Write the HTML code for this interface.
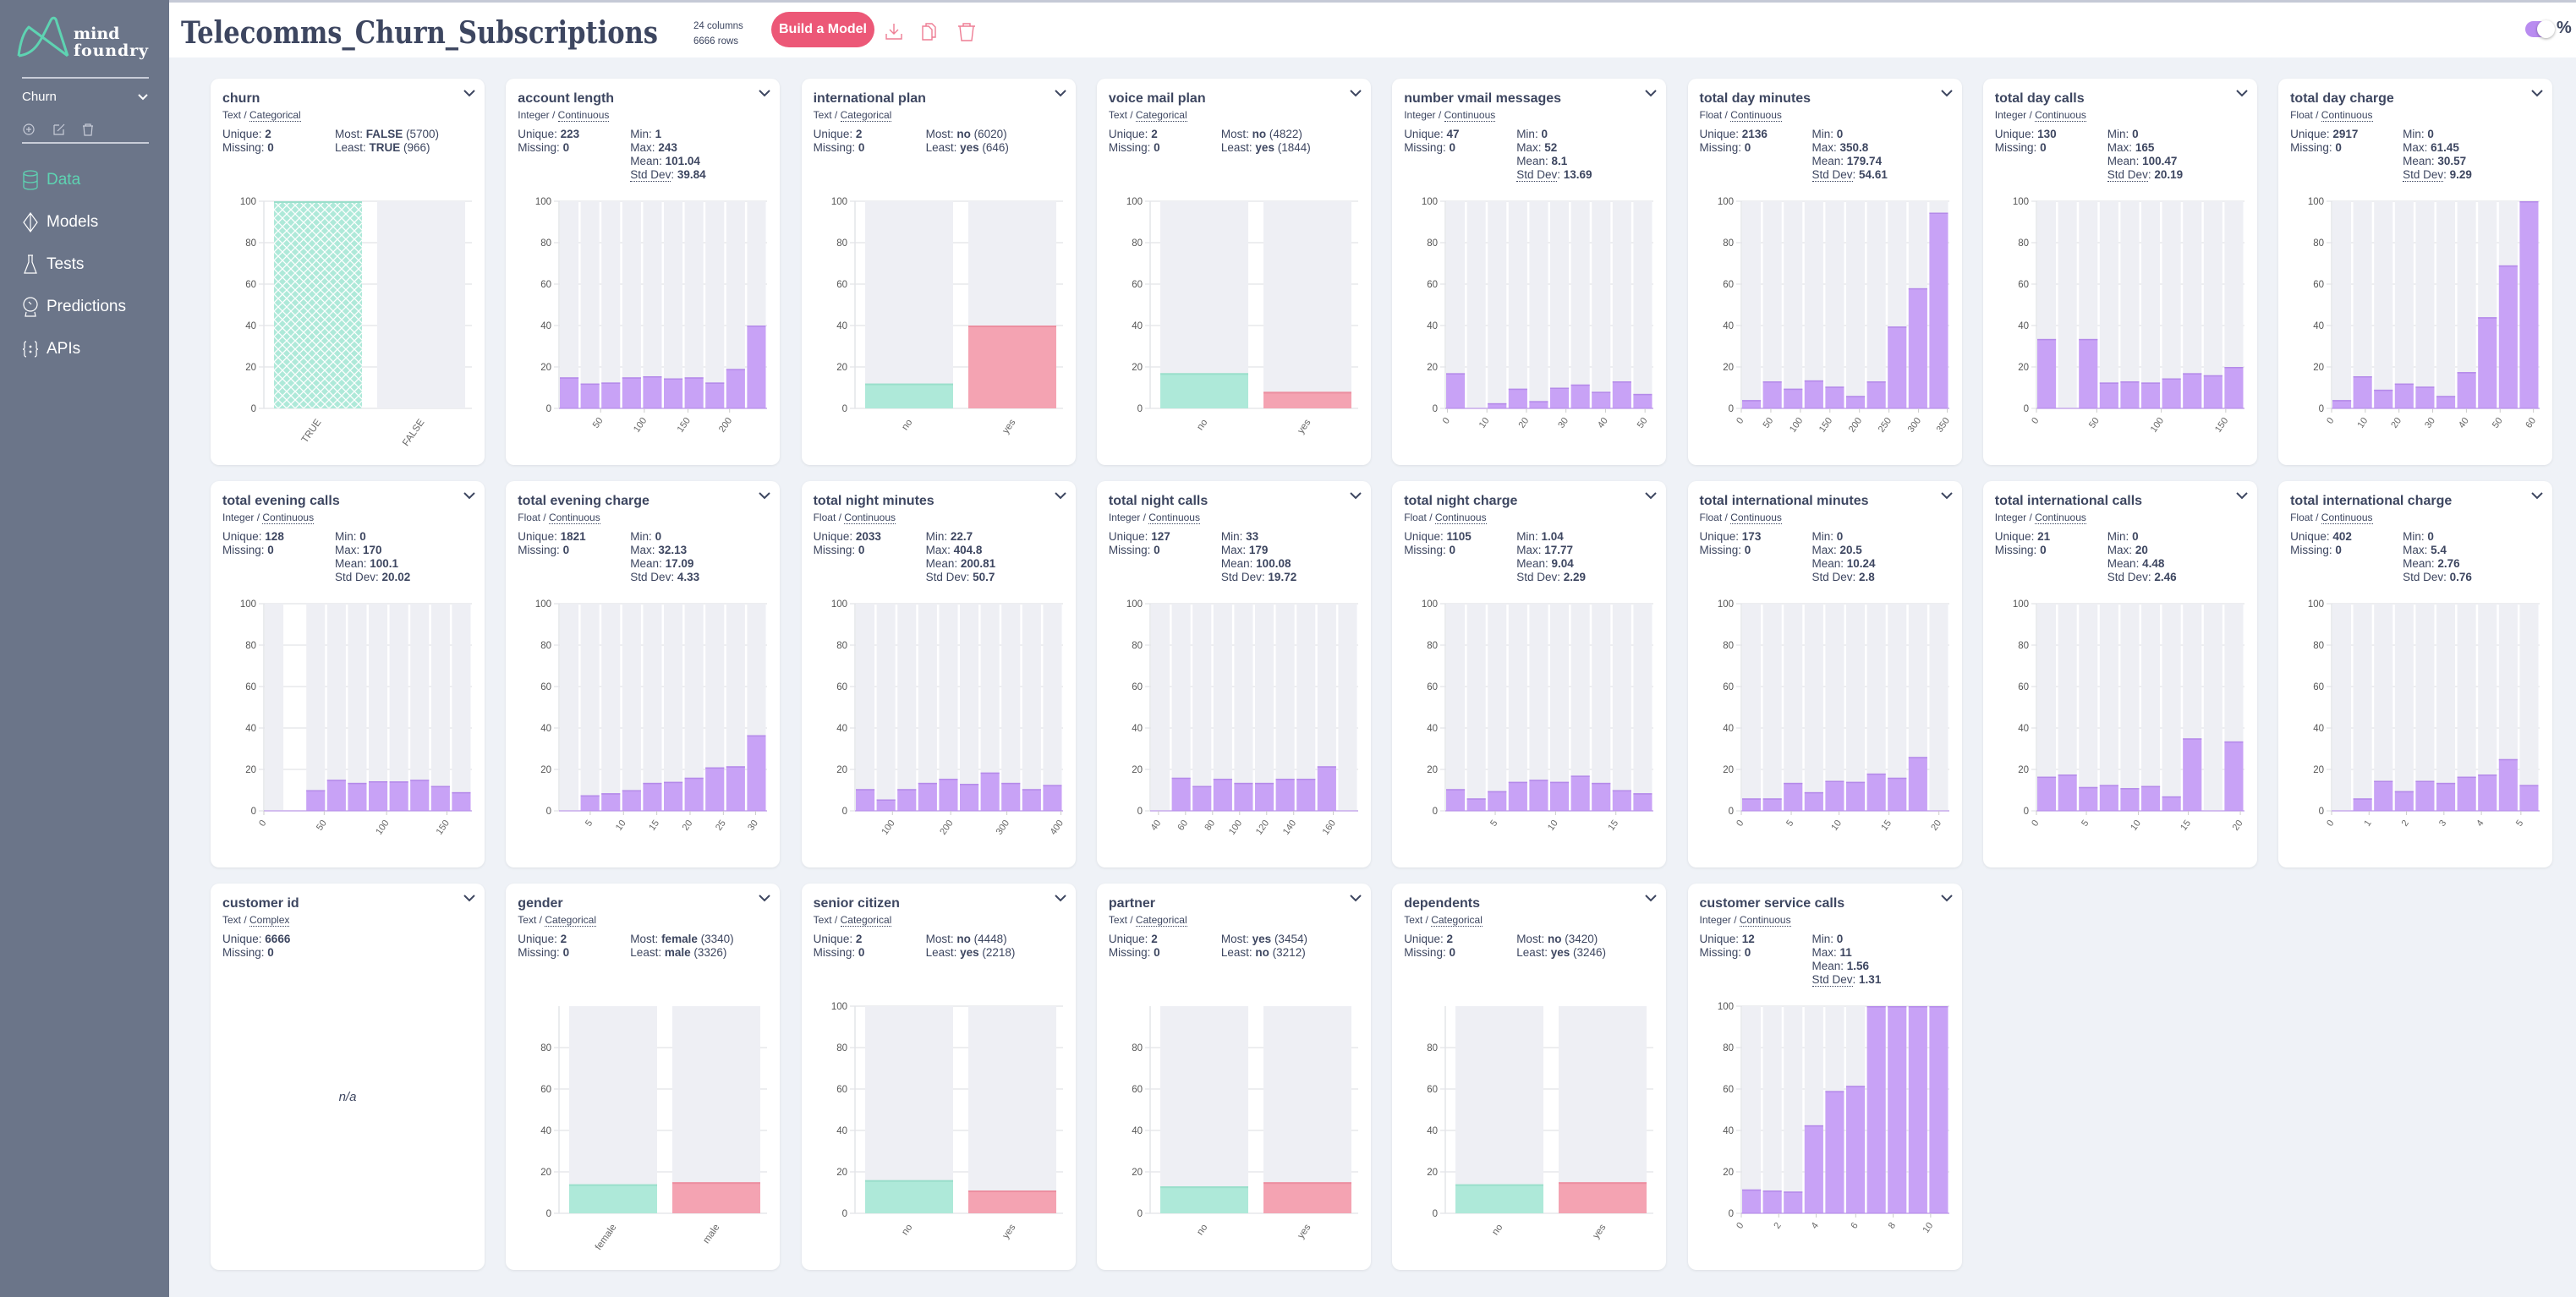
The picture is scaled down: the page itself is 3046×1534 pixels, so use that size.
<!DOCTYPE html>
<html><head><meta charset="utf-8">
<style>
*{box-sizing:border-box;margin:0;padding:0}
body{width:3046px;height:1534px;overflow:hidden;background:#eff2f7;font-family:"Liberation Sans",sans-serif;color:#3d4660;position:relative}
#side{position:absolute;left:0;top:0;width:200px;height:1534px;background:#6b7589}
#head{position:absolute;left:200px;top:0;width:2846px;height:68px;background:#fff;border-top:3px solid #c5c9d6}
.card{position:absolute;width:324px;height:457px;background:#fff;border-radius:10px;box-shadow:0 1px 3px rgba(0,0,0,.08)}
.card .t{position:absolute;left:14px;top:15px;font-size:16px;font-weight:bold;color:#3d4660;white-space:nowrap}
.card .ty{position:absolute;left:14px;top:36px;font-size:12px;color:#3d4660}
.card .ty span{border-bottom:1.5px dotted #3d4660}
.card .st{position:absolute;top:58px;font-size:13.5px;line-height:16px;white-space:nowrap}
.card .st b{font-weight:bold}
.card .ch{position:absolute;right:10px;top:12px}
.card svg.c{position:absolute;left:0;top:0}
.nav{position:absolute;left:26px;font-size:19px;color:#fff;display:flex;align-items:center}
.nav svg{margin-right:9px}
</style></head><body>
<div id="side">
<svg style="position:absolute;left:0;top:0" width="200" height="80">
<path d="M22,66 C24,50 28,38 34,32 L80,66 M22,66 C40,64 47,50 53,38 L60,24 C62,20 66,20 67,26 L80,66" fill="none" stroke="#5ed3b2" stroke-width="3" stroke-linejoin="round"/>
<text x="87" y="46" font-family="DejaVu Serif" font-weight="bold" font-size="19" fill="#fff">mind</text>
<text x="87" y="66" font-family="DejaVu Serif" font-weight="bold" font-size="19" fill="#fff" textLength="88">foundry</text>
</svg>
<div style="position:absolute;left:26px;top:91px;width:150px;height:2px;background:#c8ccd8"></div>
<div style="position:absolute;left:26px;top:106px;font-size:15px;color:#fff">Churn</div>
<svg style="position:absolute;left:162px;top:110px" width="14" height="10"><path d="M2,2 L7,7 L12,2" fill="none" stroke="#fff" stroke-width="2"/></svg>
<svg style="position:absolute;left:26px;top:143px" width="120" height="20" fill="none" stroke="#c8ccd8" stroke-width="1.2">
<circle cx="8" cy="10" r="6"/><path d="M8,7 V13 M5,10 H11"/>
<path d="M38,5 H44 M38,5 V16 H49 V10 M42,12 L50,4"/>
<path d="M72,6 H84 M75,6 V4 H81 V6 M73,6 L74,17 H82 L83,6"/>
</svg>
<div style="position:absolute;left:26px;top:168px;width:150px;height:2px;background:#c8ccd8"></div>
<div class="nav" style="top:200px;color:#5ed3b2"><svg width="20" height="26" fill="none" stroke="#5ed3b2" stroke-width="1.3"><ellipse cx="10" cy="5" rx="8" ry="3"/><path d="M2,5 V21 C2,25 18,25 18,21 V5 M2,13 C2,17 18,17 18,13"/></svg>Data</div>
<div class="nav" style="top:250px"><svg width="20" height="26" fill="none" stroke="#fff" stroke-width="1.2"><path d="M10,2 L18,13 L10,24 L2,13 Z M10,2 V24"/></svg>Models</div>
<div class="nav" style="top:300px"><svg width="20" height="26" fill="none" stroke="#fff" stroke-width="1.2"><path d="M7,2 H13 M8,2 V10 L3,23 H17 L12,10 V2"/></svg>Tests</div>
<div class="nav" style="top:350px"><svg width="20" height="26" fill="none" stroke="#fff" stroke-width="1.2"><circle cx="10" cy="10" r="8"/><path d="M5,19 L4,24 H16 L15,19 M8,7 L11,10"/></svg>Predictions</div>
<div class="nav" style="top:400px"><svg width="20" height="26" fill="none" stroke="#fff" stroke-width="1.2"><path d="M5,4 C2,4 3,8 3,11 C3,13 1,13 1,13 C1,13 3,13 3,15 C3,18 2,22 5,22 M15,4 C18,4 17,8 17,11 C17,13 19,13 19,13 C19,13 17,13 17,15 C17,18 18,22 15,22"/><circle cx="10" cy="10" r=".8" fill="#fff"/><circle cx="10" cy="16" r=".8" fill="#fff"/></svg>APIs</div>
</div>
<div id="head">
<svg style="position:absolute;left:14px;top:10px" width="570" height="50"><text x="0" y="38" font-family="DejaVu Serif" font-weight="bold" font-size="36" fill="#3d4660" textLength="564" lengthAdjust="spacingAndGlyphs">Telecomms_Churn_Subscriptions</text></svg>
<div style="position:absolute;left:620px;top:19px;font-size:11.5px;line-height:18px;color:#3d4660">24 columns<br>6666 rows</div>
<div style="position:absolute;left:712px;top:11px;width:122px;height:42px;border-radius:21px;background:#ec5877;color:#fff;font-weight:bold;font-size:16px;line-height:42px;text-align:center">Build a Model</div>
<svg style="position:absolute;left:840px;top:22px" width="120" height="28" fill="none" stroke="#ee7d94" stroke-width="1.4">
<path d="M17,3 V15 M12,10 L17,15 L22,10 M8,15 V21 H26 V15"/>
<path d="M51,6 H58 L62,10 V22 H51 Z M55,6 V3 H62 L66,7 V19 H62"/>
<path d="M93,6 H113 M99,6 V3 H107 V6 M95,6 L97,23 H109 L111,6"/>
</svg>
<div style="position:absolute;left:2786px;top:22px;width:33px;height:19px;border-radius:10px;background:#b98cf0"></div>
<div style="position:absolute;left:2800px;top:21px;width:21px;height:21px;border-radius:11px;background:#fff;box-shadow:0 1px 3px rgba(0,0,0,.35)"></div>
<div style="position:absolute;left:2823px;top:19px;font-size:20px;font-weight:bold;color:#3d4660">%</div>
</div>
<div id="cards"></div>
<script>
var C=[
["churn","Text","Categorical","cat",["2","0"],[["Most: ","FALSE"," (5700)"],["Least: ","TRUE"," (966)"]],{l:["TRUE","FALSE"],v:[100,0],hatch:1}],
["account length","Integer","Continuous","num",["223","0"],["1","243","101.04","39.84"],{v:[15,12,12.5,15,15.5,14.5,15,12.5,19,40],t:[[50,.2],[100,.41],[150,.62],[200,.82]]},1],
["international plan","Text","Categorical","cat",["2","0"],[["Most: ","no"," (6020)"],["Least: ","yes"," (646)"]],{l:["no","yes"],v:[12,40]}],
["voice mail plan","Text","Categorical","cat",["2","0"],[["Most: ","no"," (4822)"],["Least: ","yes"," (1844)"]],{l:["no","yes"],v:[17,8]}],
["number vmail messages","Integer","Continuous","num",["47","0"],["0","52","8.1","13.69"],{v:[17,0,2.5,9.5,3.5,10,11.5,8,13,7],t:[[0,.01],[10,.2],[20,.39],[30,.58],[40,.77],[50,.96]]},1],
["total day minutes","Float","Continuous","num",["2136","0"],["0","350.8","179.74","54.61"],{v:[4,13,9.5,13.5,10.5,6,13,39.5,58,94.5],t:[[0,0],[50,.142],[100,.284],[150,.426],[200,.568],[250,.71],[300,.852],[350,.99]]},1],
["total day calls","Integer","Continuous","num",["130","0"],["0","165","100.47","20.19"],{v:[33.5,0,33.5,12.5,13,12.5,14.5,17,16,20],t:[[0,0],[50,.29],[100,.6],[150,.91]]},1],
["total day charge","Float","Continuous","num",["2917","0"],["0","61.45","30.57","9.29"],{v:[4,15.5,9,12,10.5,6,17.5,44,69,100],t:[[0,0],[10,.162],[20,.324],[30,.486],[40,.648],[50,.81],[60,.97]]},1],
["total evening calls","Integer","Continuous","num",["128","0"],["0","170","100.1","20.02"],{v:[0,-1,10,15,13.5,14.3,14.2,15,12,9],t:[[0,0],[50,.29],[100,.59],[150,.88]]}],
["total evening charge","Float","Continuous","num",["1821","0"],["0","32.13","17.09","4.33"],{v:[0,7.5,8.5,10,13.5,14,16,21,21.5,36.5],t:[[5,.15],[10,.31],[15,.47],[20,.63],[25,.79],[30,.945]]}],
["total night minutes","Float","Continuous","num",["2033","0"],["22.7","404.8","200.81","50.7"],{v:[10.5,5.5,10.5,13.5,15.5,13,18.5,13.5,10.5,12.5],t:[[100,.18],[200,.46],[300,.73],[400,.99]]}],
["total night calls","Integer","Continuous","num",["127","0"],["33","179","100.08","19.72"],{v:[0,16,12,15.5,13.5,13.5,15.5,15.5,21.5,0],t:[[40,.04],[60,.17],[80,.3],[100,.43],[120,.56],[140,.69],[160,.88]]}],
["total night charge","Float","Continuous","num",["1105","0"],["1.04","17.77","9.04","2.29"],{v:[10.5,6,9.5,14,15,14,17,13.5,10,8.5],t:[[5,.24],[10,.53],[15,.82]]}],
["total international minutes","Float","Continuous","num",["173","0"],["0","20.5","10.24","2.8"],{v:[6,6,13.5,9,14.5,14,18,16,26,0],t:[[0,0],[5,.24],[10,.47],[15,.71],[20,.95]]}],
["total international calls","Integer","Continuous","num",["21","0"],["0","20","4.48","2.46"],{v:[16.5,17.5,11.5,12.5,11,12,7,35,0,33.5],t:[[0,0],[5,.24],[10,.49],[15,.73],[20,.98]]}],
["total international charge","Float","Continuous","num",["402","0"],["0","5.4","2.76","0.76"],{v:[0,6,14.5,9.5,14.5,13.5,16.5,17.5,25,12.5],t:[[0,0],[1,.18],[2,.36],[3,.54],[4,.72],[5,.91]]}],
["customer id","Text","Complex","na",["6666","0"]],
["gender","Text","Categorical","cat",["2","0"],[["Most: ","female"," (3340)"],["Least: ","male"," (3326)"]],{l:["female","male"],v:[14,15],no100:1}],
["senior citizen","Text","Categorical","cat",["2","0"],[["Most: ","no"," (4448)"],["Least: ","yes"," (2218)"]],{l:["no","yes"],v:[16,11]}],
["partner","Text","Categorical","cat",["2","0"],[["Most: ","yes"," (3454)"],["Least: ","no"," (3212)"]],{l:["no","yes"],v:[13,15],no100:1}],
["dependents","Text","Categorical","cat",["2","0"],[["Most: ","no"," (3420)"],["Least: ","yes"," (3246)"]],{l:["no","yes"],v:[14,15],no100:1}],
["customer service calls","Integer","Continuous","num",["12","0"],["0","11","1.56","1.31"],{v:[11.5,11,10.5,42.5,59,61.5,100,100,100,100],t:[[0,0],[2,.18],[4,.36],[6,.55],[8,.73],[10,.91]]},1]
];
var h='';
C.forEach(function(c,i){
 var col=i%8,row=Math.floor(i/8);
 var x=249+col*349.3,y=93+row*476;
 var s='<div class="card" style="left:'+x.toFixed(1)+'px;top:'+y+'px">';
 s+='<div class="t">'+c[0]+'</div><div class="ty">'+c[1]+' / <span>'+c[2]+'</span></div>';
 s+='<svg class="ch" width="16" height="12"><path d="M2,2 L8,8 L14,2" fill="none" stroke="#3d4660" stroke-width="2"/></svg>';
 s+='<div class="st" style="left:14px">Unique: <b>'+c[4][0]+'</b><br>Missing: <b>'+c[4][1]+'</b></div>';
 if(c[3]=='cat'){s+='<div class="st" style="left:147px">'+c[5].map(function(r){return r[0]+'<b>'+r[1]+'</b>'+r[2]}).join('<br>')+'</div>';}
 if(c[3]=='num'){var u=c[7]?'<span style="border-bottom:1.5px dotted #3d4660">Std Dev</span>':'Std Dev';
  s+='<div class="st" style="left:147px">Min: <b>'+c[5][0]+'</b><br>Max: <b>'+c[5][1]+'</b><br>Mean: <b>'+c[5][2]+'</b><br>'+u+': <b>'+c[5][3]+'</b></div>';}
 if(c[3]=='na'){s+='<div style="position:absolute;left:0;width:324px;top:244px;text-align:center;font-style:italic;font-size:15px">n/a</div>';}
 else{
  var d=c[6],L=63,R=309,T=145,B=390,H=B-T;
  var g='<svg class="c" width="324" height="457"><defs><pattern id="hp'+i+'" width="10" height="10" patternUnits="userSpaceOnUse"><rect width="10" height="10" fill="#aee9d9"/><path d="M0,0 L10,10 M10,0 L0,10" stroke="#fff" stroke-width="1.3"/></pattern></defs>';
  for(var k=0;k<=5;k++){var yy=B-k*H/5;if(k==5&&d.no100)continue;
   g+='<line x1="'+(L-6)+'" x2="'+R+'" y1="'+yy+'" y2="'+yy+'" stroke="#e7e8ec" stroke-width="1.5"/>';
   g+='<text x="'+(L-9)+'" y="'+(yy+4)+'" text-anchor="end" font-size="11.5" fill="#555">'+(k*20)+'</text>';}
  g+='<line x1="'+L+'" x2="'+L+'" y1="'+T+'" y2="'+B+'" stroke="#e4e5e9" stroke-width="1.5"/>';
  if(c[3]=='cat'){
   var bw=104,xs=[L+12,L+134];
   for(var k=0;k<2;k++){var bx=xs[k],v=d.v[k],bh=v*H/100;
    g+='<rect x="'+bx+'" y="'+T+'" width="'+bw+'" height="'+H+'" fill="#eeeff4"/>';
    var f=k==0?(d.hatch?'url(#hp'+i+')':'#aee9d9'):'#f4a3b2';
    if(v>0)g+='<rect x="'+bx+'" y="'+(B-bh)+'" width="'+bw+'" height="'+bh+'" fill="'+f+'"/><rect x="'+bx+'" y="'+(B-bh)+'" width="'+bw+'" height="2" fill="'+(k==0?'#9adfcb':'#ec8ea0')+'"/>';
    var cx=bx+bw/2;
    g+='<text transform="translate('+(cx+4)+','+(B+16)+') rotate(-55)" text-anchor="end" font-size="11.5" fill="#666">'+d.l[k]+'</text>';}
  }else{
   var n=d.v.length,w=(R-L)/n;
   for(var k=0;k<n;k++){var v=d.v[k],bx=L+k*w+1;
    if(v>=0)g+='<rect x="'+bx.toFixed(1)+'" y="'+T+'" width="'+(w-2.5).toFixed(1)+'" height="'+H+'" fill="#eeeff4"/>';
    if(v>0){var bh=v*H/100;g+='<rect x="'+bx.toFixed(1)+'" y="'+(B-bh).toFixed(1)+'" width="'+(w-2.5).toFixed(1)+'" height="'+bh.toFixed(1)+'" fill="#c8a2f6"/><rect x="'+bx.toFixed(1)+'" y="'+(B-bh).toFixed(1)+'" width="'+(w-2.5).toFixed(1)+'" height="1.5" fill="#b48ae9"/>';}}
   g+='<line x1="'+L+'" x2="'+R+'" y1="'+B+'" y2="'+B+'" stroke="#b48ae9" stroke-width="1"/>';
   d.t.forEach(function(t){var tx=L+t[1]*(R-L);
    g+='<line x1="'+tx+'" x2="'+tx+'" y1="'+B+'" y2="'+(B+5)+'" stroke="#ccc"/>';
    g+='<text transform="translate('+(tx+3)+','+(B+14)+') rotate(-55)" text-anchor="end" font-size="11" fill="#666">'+t[0]+'</text>';});
  }
  s+=g+'</svg>';
 }
 s+='</div>';h+=s;
});
document.getElementById('cards').innerHTML=h;
</script>
</body></html>
